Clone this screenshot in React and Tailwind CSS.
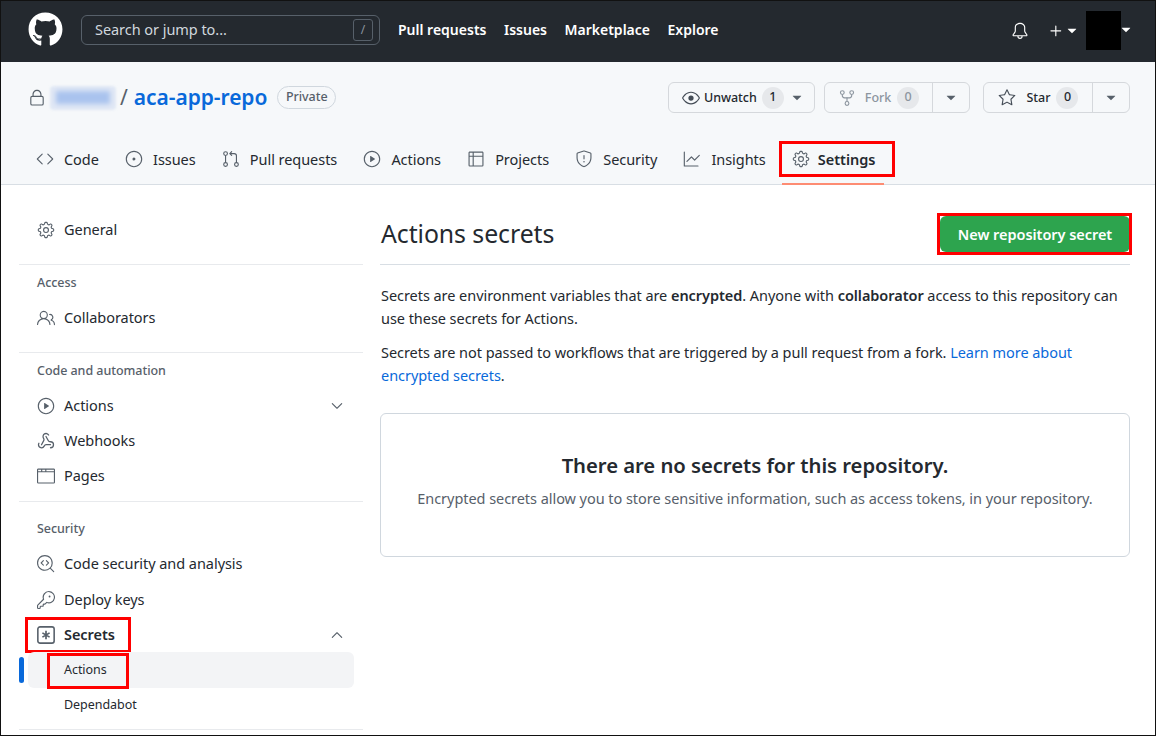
import {
  GoBell, GoPlus, GoTriangleDown, GoLock, GoEye, GoRepoForked, GoStar, GoCode, GoIssueOpened,
  GoGitPullRequest, GoPlay, GoTable, GoShield, GoGraph, GoGear, GoPeople, GoChevronDown, GoChevronUp,
  GoBrowser, GoCodescan, GoKey,
} from 'react-icons/go';
import { FaGithub } from 'react-icons/fa';
import { Webhook } from 'lucide-react';

const TOP_NAV = ['Pull requests', 'Issues', 'Marketplace', 'Explore'];

const TABS = [
  { label: 'Code', icon: GoCode },
  { label: 'Issues', icon: GoIssueOpened },
  { label: 'Pull requests', icon: GoGitPullRequest },
  { label: 'Actions', icon: GoPlay },
  { label: 'Projects', icon: GoTable },
  { label: 'Security', icon: GoShield },
  { label: 'Insights', icon: GoGraph },
];

function KeyAsterisk({ size, className }) {
  return (
    <svg width={size} height={size} viewBox="0 0 16 16" fill="none" stroke="currentColor" strokeWidth="1.4" className={className}>
      <rect x="0.75" y="0.75" width="14.5" height="14.5" rx="2" />
      <path d="M8 4.2v7.6M4.8 6.1l6.4 3.8M11.2 6.1l-6.4 3.8" strokeWidth="1.5" />
    </svg>
  );
}

function WebhookIcon({ size, className }) {
  return <Webhook size={size} strokeWidth={1.7} className={className} />;
}

function Count({ children, muted }) {
  return (
    <span className={`flex h-[22px] w-[22px] items-center justify-center rounded-full bg-[#e6e8eb] text-[12.5px] font-medium ${muted ? 'text-[#8c959f]' : 'text-[#24292f]'}`}>
      {children}
    </span>
  );
}

function SplitButton({ icon: Icon, label, count, muted, width, textGap }) {
  return (
    <div className={`flex h-[31px] items-center rounded-md border border-[#d5d8dc] bg-[#f6f8fa] text-[12.5px] font-medium ${width} ${muted ? 'text-[#8c959f]' : 'text-[#24292f]'}`}>
      <div className="flex h-full flex-1 items-center justify-center border-r border-[#d5d8dc]">
        <Icon size={18} className={muted ? 'text-[#8c959f]' : 'text-[#444c56]'} />
        <span className={`pt-px ${textGap}`}>{label}</span>
        <Count muted={muted}>{count}</Count>
      </div>
      <div className="flex w-[36px] justify-center">
        <GoTriangleDown size={16} className="text-[#57606a]" />
      </div>
    </div>
  );
}

function NavRow({ icon: Icon, children, strong, chevron: Chevron }) {
  return (
    <div className={`flex h-[35px] items-center pl-[18px] pr-[17px] text-[#24292f] ${strong ? 'font-semibold' : ''}`}>
      {Icon && <Icon size={18} className="mr-[9px] text-[#57606a]" />}
      <span className="flex-1">{children}</span>
      {Chevron && <Chevron size={18} className="text-[#57606a]" />}
    </div>
  );
}

function Heading({ children }) {
  return <div className="flex h-[35px] items-center pl-[18px] pt-[2px] text-[12.5px] font-medium text-[#57606a]">{children}</div>;
}

export default function App() {
  return (
    <div className="flex h-[736px] w-[1156px] flex-col overflow-hidden border border-[#111] bg-white font-['Noto_Sans',sans-serif] text-[14.5px] tracking-[-0.05px] text-[#24292f]">
      <header className="flex h-[61px] shrink-0 items-center bg-[#24292f] pb-[4px] pl-[27px] pr-[21px] text-white">
        <FaGithub size={35} />
        <div className="ml-[18px] flex h-[30px] w-[299px] items-center justify-between rounded-md border border-[#57606a] pl-[13px] pr-[6px] text-[#d0d7de]">
          <span>Search or jump to...</span>
          <span className="flex h-[22px] w-[20px] items-center justify-center rounded-[3px] border border-[#57606a] text-xs text-[#8c959f]">/</span>
        </div>
        <nav className="ml-[18px] flex gap-[17.5px] text-sm font-semibold tracking-normal">
          {TOP_NAV.map(n => <span key={n}>{n}</span>)}
        </nav>
        <div className="ml-auto flex items-center self-start pt-[10px]">
          <GoBell size={18} />
          <GoPlus size={18} className="ml-[18px]" />
          <GoTriangleDown size={16} className="-ml-[1px]" />
          <div className="ml-[6px] h-[39px] w-[35px] bg-black" />
          <GoTriangleDown size={16} className="-ml-[3px] -mt-[2px]" />
        </div>
      </header>

      <div className="h-[123px] shrink-0 border-b border-[#d8dee4] bg-[#f6f8fa]">
        <div className="flex h-[71px] items-center pl-[27px] pr-[25px]">
          <GoLock size={18} className="text-[#57606a]" />
          <div className="ml-[4px] flex h-[24px] w-[66px] items-center justify-center rounded-sm bg-[#e1e8f5] blur-[1px]">
            <div className="h-[13px] w-[54px] bg-[#a9c3ee] blur-[2px]" />
          </div>
          <span className="ml-[4px] text-[21px] text-[#57606a]">/</span>
          <span className="ml-[6px] text-[21px] font-semibold text-[#0969da]">aca-app-repo</span>
          <span className="ml-[10px] rounded-full border border-[#d0d7de] px-[7.5px] py-px text-[12.5px] font-medium text-[#57606a]">Private</span>
          <div className="ml-auto flex">
            <div className="flex h-[31px] w-[147px] items-center rounded-md border border-[#d5d8dc] bg-[#f6f8fa] pl-[13px] text-[12.5px] font-medium">
              <GoEye size={18} className="text-[#444c56]" />
              <span className="ml-[4px] pt-px">Unwatch</span>
              <span className="ml-[5px]"><Count>1</Count></span>
              <GoTriangleDown size={16} className="ml-[5px] text-[#57606a]" />
            </div>
            <div className="ml-[9px]"><SplitButton icon={GoRepoForked} label="Fork" count="0" muted width="w-[146px]" textGap="ml-[9px] mr-[6px]" /></div>
            <div className="ml-[13px]"><SplitButton icon={GoStar} label="Star" count="0" width="w-[147px]" textGap="ml-[11px] mr-[6px]" /></div>
          </div>
        </div>
        <nav className="flex h-[52px] items-start gap-[26.2px] pl-[35px] pt-[8px]">
          {TABS.map(({ label, icon: Icon }) => (
            <div key={label} className="flex h-[36px] items-center gap-[10px] text-[#24292f]">
              <Icon size={18} className="text-[#57606a]" />
              <span className="pt-px">{label}</span>
            </div>
          ))}
          <div className="relative flex h-[36px] items-center gap-[8px] font-semibold">
            <GoGear size={18} className="text-[#57606a]" />
            <span className="pt-px">Settings</span>
            <span className="absolute -left-[13px] -right-[20px] top-0 h-[36px] border-[3px] border-[#f00]" />
            <span className="absolute -left-[10px] -right-[9px] top-[42px] h-[2px] bg-[#fd8c73]" />
          </div>
        </nav>
      </div>

      <div className="flex flex-1 pl-[18px] pr-[25px]">
        <aside className="w-[344px] shrink-0 pt-[27px]">
          <NavRow icon={GoGear}>General</NavRow>
          <div className="mt-[17px] border-t border-[#e8eaed]" />
          <Heading>Access</Heading>
          <NavRow icon={GoPeople}>Collaborators</NavRow>
          <div className="mt-[17px] border-t border-[#e8eaed]" />
          <Heading>Code and automation</Heading>
          <NavRow icon={GoPlay} chevron={GoChevronDown}>Actions</NavRow>
          <NavRow icon={WebhookIcon}>Webhooks</NavRow>
          <NavRow icon={GoBrowser}>Pages</NavRow>
          <div className="mt-[8px] border-t border-[#e8eaed]" />
          <div className="pt-[9px]"><Heading>Security</Heading></div>
          <NavRow icon={GoCodescan}>Code security and analysis</NavRow>
          <div className="pt-px"><NavRow icon={GoKey}>Deploy keys</NavRow></div>
          <div className="relative">
            <NavRow icon={KeyAsterisk} strong chevron={GoChevronUp}>Secrets</NavRow>
            <span className="absolute left-[6px] top-0 h-[36px] w-[106px] border-[3px] border-[#f00]" />
          </div>
          <div className="relative flex h-[35px] items-center">
            <span className="h-[26px] w-[5px] rounded-full bg-[#0969da]" />
            <div className="ml-[4px] flex h-[36px] w-[326px] items-center rounded-md bg-[#f3f4f6] pl-[36px] pt-px text-[12.5px]">Actions</div>
            <span className="absolute left-[28px] top-[1px] h-[36px] w-[82px] border-[3px] border-[#f00]" />
          </div>
          <div className="flex h-[35px] items-center pl-[45px] pt-[2px] text-[12.5px]">Dependabot</div>
          <div className="mt-[7px] border-t border-[#e8eaed]" />
        </aside>

        <main className="ml-[17px] flex-1">
          <div className="flex h-[80px] items-center justify-between border-b border-[#d8dee4] pl-px pt-[19px]">
            <h2 className="text-[24.8px] font-normal">Actions secrets</h2>
            <div className="relative">
              <button className="flex h-[36px] w-[190px] items-center justify-center rounded-md bg-[#2da44e] pt-px font-semibold text-white">New repository secret</button>
              <span className="absolute -bottom-[3px] -left-[3px] -right-[2px] -top-[3px] border-[3px] border-[#f00]" />
            </div>
          </div>
          <p className="mt-[19px] pl-px leading-[23px]">
            Secrets are environment variables that are <b className="font-semibold">encrypted</b>. Anyone with <b className="font-semibold">collaborator</b> access to this repository can use these secrets for Actions.
          </p>
          <p className="mt-[11px] pl-px leading-[23px]">
            Secrets are not passed to workflows that are triggered by a pull request from a fork. <span className="text-[#0969da]">Learn more about encrypted secrets</span>.
          </p>
          <div className="mt-[26px] flex h-[144px] flex-col items-center rounded-md border border-[#d0d7de] pt-[37px]">
            <h3 className="text-[20.3px] leading-[28px] font-semibold">There are no secrets for this repository.</h3>
            <p className="mt-[9px] leading-[20px] text-[#57606a]">Encrypted secrets allow you to store sensitive information, such as access tokens, in your repository.</p>
          </div>
        </main>
      </div>
    </div>
  );
}
